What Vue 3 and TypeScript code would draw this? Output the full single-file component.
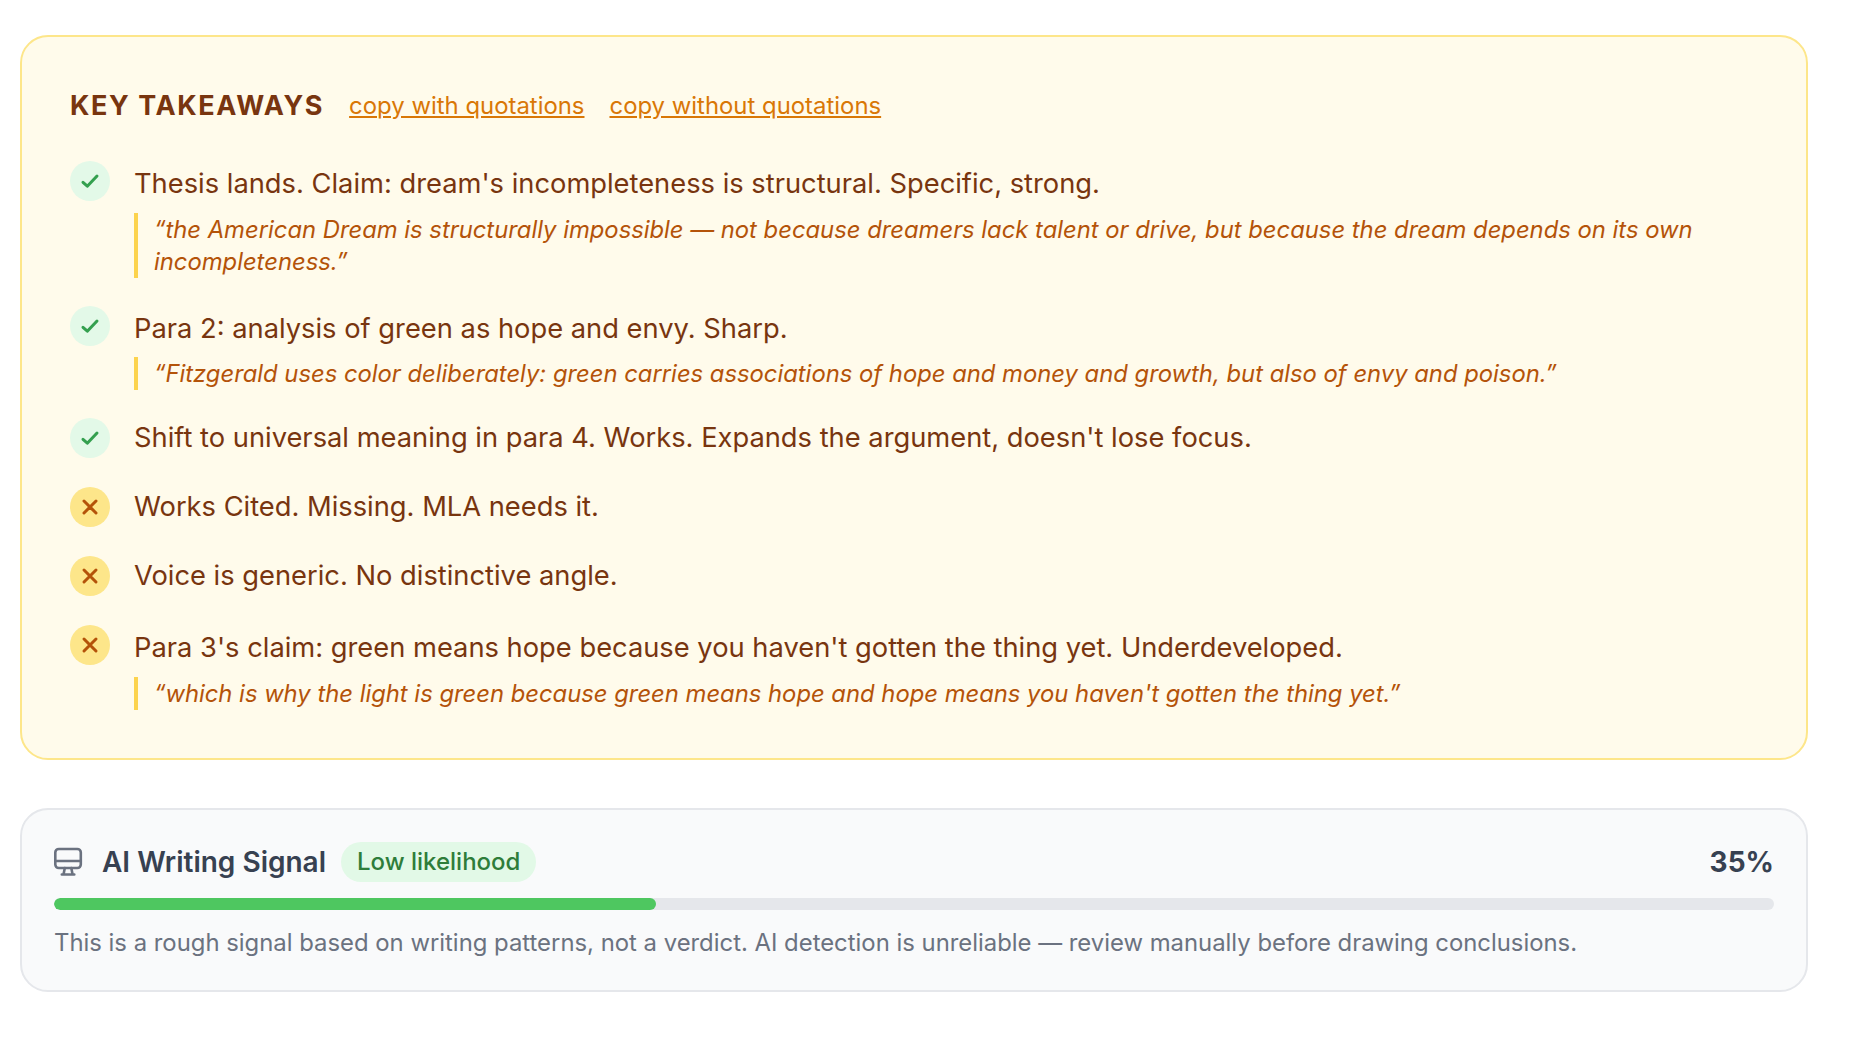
<template>
  <div class="page">
    <section class="takeaways">
      <header class="takeaways-head">
        <h2>KEY TAKEAWAYS</h2>
        <a href="#">copy with quotations</a>
        <a href="#">copy without quotations</a>
      </header>
      <ul class="items">
        <li v-for="item in items" :key="item.text" class="item">
          <span class="badge-icon" :class="item.ok ? 'is-ok' : 'is-bad'">
            <svg v-if="item.ok" width="20" height="20" viewBox="0 0 20 20" fill="none" stroke="currentColor" stroke-width="3" stroke-linecap="round" stroke-linejoin="round">
              <path d="M3 11.300l4.300 3.900L17 5" />
            </svg>
            <svg v-else width="20" height="20" viewBox="0 0 20 20" fill="none" stroke="currentColor" stroke-width="3" stroke-linecap="round">
              <path d="M4 4l12 12M16 4L4 16" />
            </svg>
          </span>
          <div class="item-body" :class="{ 'has-quote': item.quote }">
            <p class="item-text">{{ item.text }}</p>
            <blockquote v-if="item.quote">{{ item.quote }}</blockquote>
          </div>
        </li>
      </ul>
    </section>

    <section class="signal">
      <div class="signal-head">
        <svg class="monitor" width="30" height="30" viewBox="0 0 30 30" fill="none" stroke="currentColor" stroke-width="2.600" stroke-linejoin="round" stroke-linecap="round">
          <rect x="1.300" y="2" width="25.500" height="19" rx="3.500" />
          <path d="M1.300 14h25.500M10.800 21l-1.200 6M17.300 21l1.200 6M7.800 27.500h12.500" />
        </svg>
        <span class="signal-title">AI Writing Signal</span>
        <span class="pill">Low likelihood</span>
        <span class="percent">{{ score }}%</span>
      </div>
      <div class="track">
        <div class="fill" :style="{ width: score + '%' }"></div>
      </div>
      <p class="signal-note">This is a rough signal based on writing patterns, not a verdict. AI detection is unreliable — review manually before drawing conclusions.</p>
    </section>
  </div>
</template>

<script setup lang="ts">
interface Takeaway {
  ok: boolean;
  text: string;
  quote?: string;
}

const score = 35;

const items: Takeaway[] = [
  {
    ok: true,
    text: "Thesis lands. Claim: dream's incompleteness is structural. Specific, strong.",
    quote: "“the American Dream is structurally impossible — not because dreamers lack talent or drive, but because the dream depends on its own incompleteness.”",
  },
  {
    ok: true,
    text: "Para 2: analysis of green as hope and envy. Sharp.",
    quote: "“Fitzgerald uses color deliberately: green carries associations of hope and money and growth, but also of envy and poison.”",
  },
  { ok: true, text: "Shift to universal meaning in para 4. Works. Expands the argument, doesn't lose focus." },
  { ok: false, text: "Works Cited. Missing. MLA needs it." },
  { ok: false, text: "Voice is generic. No distinctive angle." },
  {
    ok: false,
    text: "Para 3's claim: green means hope because you haven't gotten the thing yet. Underdeveloped.",
    quote: "“which is why the light is green because green means hope and hope means you haven't gotten the thing yet.”",
  },
];
</script>

<style>
html, body {
  background: #ffffff;
}
</style>

<style scoped>
.page {
  font-family: Inter, "Liberation Sans", sans-serif;
  padding: 35px 44px 0 20px;
  display: flex;
  flex-direction: column;
  gap: 48px;
}

.takeaways {
  background: #fffbeb;
  border: 2px solid #fde68a;
  border-radius: 28px;
  padding: 48px 48px 49px;
}

.takeaways-head {
  display: flex;
  align-items: center;
  gap: 25px;
  height: 40px;
  margin-bottom: 36px;
}

.takeaways-head h2 {
  margin: 0;
  font-size: 27px;
  font-weight: 700;
  letter-spacing: 1.600px;
  color: #78350f;
}

.takeaways-head a {
  font-size: 23.900px;
  color: #d97706;
  text-decoration: underline;
}

.items {
  list-style: none;
  margin: 0;
  padding: 0;
  display: flex;
  flex-direction: column;
  gap: 29px;
}

.item {
  display: flex;
  gap: 24px;
}

.badge-icon {
  flex: none;
  width: 40px;
  height: 40px;
  border-radius: 50%;
  display: flex;
  align-items: center;
  justify-content: center;
}

.badge-icon.is-ok {
  background: #e3f9e8;
  color: #34a04f;
}

.badge-icon.is-bad {
  background: #fde68a;
  color: #b45309;
}

.item-body {
  min-width: 0;
}

.item-body.has-quote {
  padding-top: 3px;
}

.item-text {
  margin: 0;
  font-size: 27.300px;
  line-height: 39px;
  min-height: 40px;
  color: #78350f;
}

.has-quote .item-text {
  line-height: 40px;
}

blockquote {
  margin: 8.500px 0 -1px;
  padding: 1px 0 0 16px;
  border-left: 4px solid #fcd34d;
  font-size: 23.800px;
  line-height: 32px;
  font-style: italic;
  color: #b45309;
}

.signal {
  background: #f9fafb;
  border: 2px solid #e5e7eb;
  border-radius: 28px;
  padding: 32px 32px 31px;
}

.signal-head {
  display: flex;
  align-items: center;
  height: 40px;
  color: #374151;
}

.monitor {
  color: #6b7280;
  margin-right: 18px;
}

.signal-title {
  font-size: 28px;
  font-weight: 600;
  margin-right: 15px;
}

.pill {
  height: 40px;
  padding: 0 16px;
  border-radius: 20px;
  background: #e2f9e7;
  color: #2e7d3a;
  font-size: 24px;
  font-weight: 500;
  display: flex;
  align-items: center;
}

.percent {
  margin-left: auto;
  font-size: 28px;
  font-weight: 700;
}

.track {
  height: 12px;
  margin-top: 16px;
  border-radius: 6px;
  background: #e5e7eb;
  overflow: hidden;
}

.fill {
  height: 100%;
  border-radius: 6px;
  background: #4ec760;
}

.signal-note {
  margin: 17px 0 0;
  font-size: 23.870px;
  line-height: 32px;
  color: #6b7280;
}
</style>
